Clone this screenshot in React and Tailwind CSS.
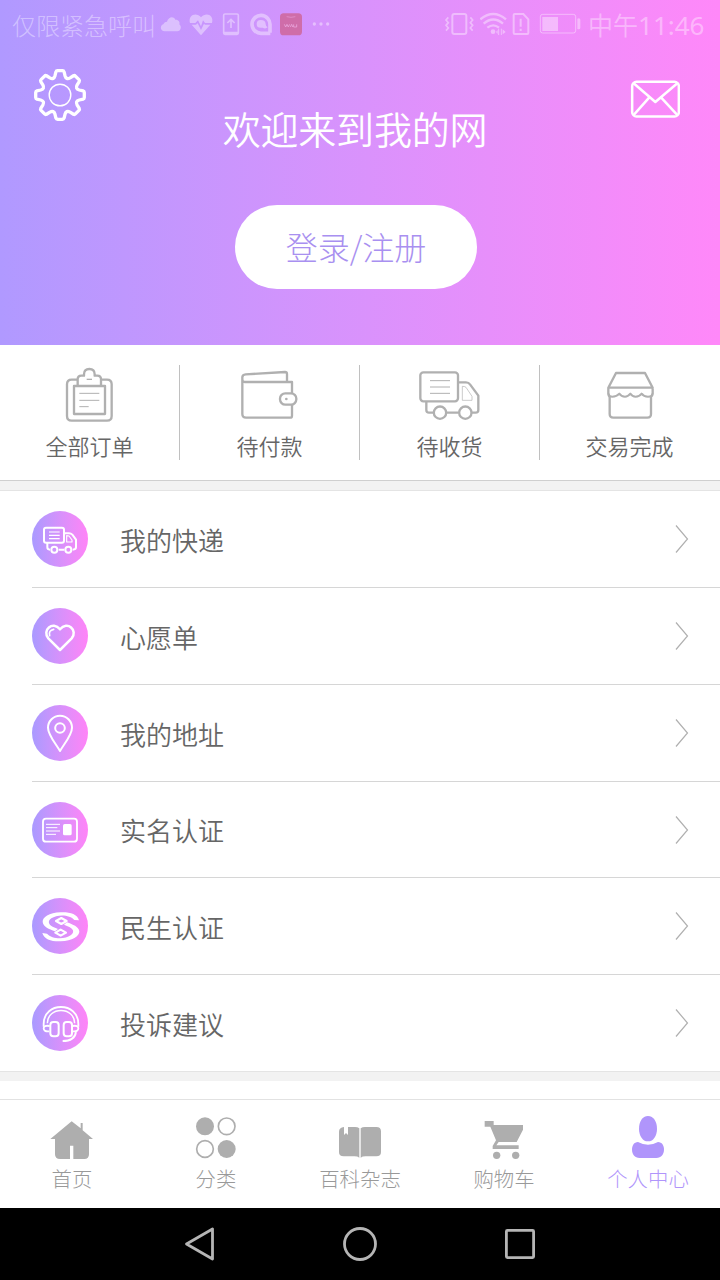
const orderTabs = [
  { label: "全部订单", icon: ClipboardIcon },
  { label: "待付款", icon: WalletIcon },
  { label: "待收货", icon: DeliveryIcon },
  { label: "交易完成", icon: ShopIcon },
];

const menuItems = [
  { label: "我的快递", icon: TruckBadge, height: "h-[97px]" },
  { label: "心愿单", icon: HeartBadge, height: "h-[97px]" },
  { label: "我的地址", icon: PinBadge, height: "h-[97px]" },
  { label: "实名认证", icon: IdCardBadge, height: "h-[96px]" },
  { label: "民生认证", icon: BankBadge, height: "h-[97px]" },
  { label: "投诉建议", icon: HeadsetBadge, height: "h-[96px]" },
];

const navTabs = [
  { label: "首页", icon: HomeIcon },
  { label: "分类", icon: CategoryIcon },
  { label: "百科杂志", icon: BookIcon },
  { label: "购物车", icon: CartIcon },
  { label: "个人中心", icon: UserIcon, active: true },
];

export default function App() {
  return (
    <div className="flex h-[1280px] w-[720px] flex-col overflow-hidden bg-white font-['Noto_Sans_CJK_SC',sans-serif] font-[350]">
      <Header />
      <OrderTabs />
      <div className="h-[11px] shrink-0 border-t border-b border-t-[#cfcfcf] border-b-[#e4e4e4] bg-[#f2f2f2]" />
      <main className="shrink-0">
        {menuItems.map((item, i) => (
          <MenuRow key={item.label} item={item} last={i === menuItems.length - 1} />
        ))}
      </main>
      <div className="h-[10px] shrink-0 border-t border-[#e4e4e4] bg-[#f2f2f2]" />
      <div className="flex-1" />
      <TabBar />
      <SystemNav />
    </div>
  );
}

function Header() {
  return (
    <header className="flex h-[345px] shrink-0 flex-col bg-linear-to-r from-[#b099ff] to-[#ff88f9]">
      <StatusBar />
      <div className="flex h-[105px] items-start justify-between pr-10 pl-[34px]">
        <GearIcon />
        <svg className="mt-[30px] h-[38px] w-[50px]" viewBox="810 240 150 114" fill="none" stroke="#fff" strokeWidth="7.500" strokeLinejoin="round">
          <rect x="816.500" y="245.500" width="140" height="104" rx="13" />
          <path d="M820 249 886 306 953 249M820 346 868 292M903 292 953 346" />
        </svg>
      </div>
      <h1 className="-mt-[54px] -translate-x-[5px] text-center text-[38px] leading-[54px] font-[350] tracking-[-0.2px] text-white">
        欢迎来到我的网
      </h1>
      <button className="mt-[50px] ml-[235px] h-[84px] w-[242px] rounded-full bg-white pb-0.5 text-[32px] font-light text-[#a990f0]">
        登录/注册
      </button>
    </header>
  );
}

function StatusBar() {
  return (
    <div className="flex h-[50px] shrink-0 items-center justify-between pr-[16px] pl-3 text-white/40">
      <div className="flex items-center">
        <span className="w-[144px] text-[24px] leading-[48px] font-light whitespace-nowrap">仅限紧急呼叫</span>
        <svg className="size-[30px]" viewBox="468 30 90 90" fill="currentColor">
          <path d="M494 94C480 94 479 76 490 73 492 67 497 65 501 65 505 51 520 47 526 59 535 58 541 66 538 73 546 79 543 94 532 94Z" />
        </svg>
        <svg className="size-[30px]" viewBox="558 30 90 90" fill="currentColor">
          <path d="M570 69C563 44 590 35 603 52 617 35 643 44 636 69H615L609 61 603 79 594 61 586 69ZM575 74H588L593 70 603 90 612 71 615 74H631L603 106Z" />
        </svg>
        <svg className="size-[30px]" viewBox="648 30 90 90" fill="none" stroke="currentColor" strokeWidth="5">
          <path d="M671 99V46Q671 42 675 42H711Q715 42 715 46V99Q715 103 711 103H675Q671 103 671 99ZM671 98H715M693 84V58M682 69 693 58 704 69" />
        </svg>
        <svg className="size-[30px]" viewBox="738 30 90 90" fill="none" stroke="currentColor">
          <path d="M810 98V74A27 27 0 1 0 783 100H811" strokeWidth="11" />
          <path d="M770 72Q770 60 782 60 797 60 797 73 797 79 803 82 796 88 788 83 770 86 770 72Z" fill="currentColor" stroke="none" />
        </svg>
        <svg className="size-[30px]" viewBox="828 30 90 90">
          <rect x="840" y="40" width="66" height="66" rx="11" fill="#cf6da9" />
          <path d="M860 50Q873 54 886 50" stroke="#e08bc8" strokeWidth="3" fill="none" />
          <path d="M853 73 857 81 861 73 865 81 869 73M871 81 875 73 878 81M881 73V81H890V73" stroke="#e9a5dc" strokeWidth="2.500" fill="none" />
        </svg>
        <svg className="size-[30px]" viewBox="918 30 90 90" fill="currentColor">
          <circle cx="943" cy="72" r="5" />
          <circle cx="963" cy="72" r="5" />
          <circle cx="983" cy="72" r="5" />
        </svg>
      </div>
      <div className="flex items-center">
        <svg className="h-[30px] w-[30px]" viewBox="252 30 90 90" fill="none" stroke="currentColor" strokeWidth="6">
          <rect x="277" y="42" width="42" height="60" rx="6" />
          <path d="M265 52 258 60 265 68 258 76 265 84 258 92M331 52 338 60 331 68 338 76 331 84 338 92" strokeWidth="5" />
        </svg>
        <svg className="ml-1.5 h-[30px] w-[28px]" viewBox="360 30 84 90" fill="none" stroke="currentColor" strokeWidth="7">
          <path d="M361 58Q400 26 438 58M371 71Q400 46 429 71M382 83Q400 69 417 83" />
          <circle cx="399" cy="95" r="7" fill="currentColor" stroke="none" />
          <path d="M416 86V105M424 86V105" strokeWidth="3" />
          <path d="M413 90 408 96 413 102ZM428 88 437 96 428 103Z" fill="currentColor" stroke="none" />
        </svg>
        <svg className="ml-1 h-[30px] w-[20px]" viewBox="456 30 60 90" fill="none" stroke="currentColor" strokeWidth="6">
          <path d="M461 44Q461 42 464 42H490L505 58V99Q505 102 502 102H464Q461 102 461 99Z" />
          <path d="M482 56V80M482 86V93" />
        </svg>
        <svg className="ml-[7px] h-[30px] w-[43px]" viewBox="537 30 129 90" fill="none" stroke="currentColor" strokeWidth="3">
          <rect x="541" y="43" width="106" height="56" rx="7" />
          <path d="M547 51H594V93H547ZM652 56Q661 53 661 60V83Q661 90 652 87Z" fill="currentColor" stroke="none" />
        </svg>
        <span className="ml-[6px] w-[116px] -translate-y-px text-[25px] leading-[48px] whitespace-nowrap">
          中午<span className="font-['Noto_Sans'] text-[26px] font-normal">11:46</span>
        </span>
      </div>
    </div>
  );
}

function GearIcon() {
  return (
    <svg className="mt-[19px] size-[52px]" viewBox="-26 -26 52 52" fill="none" stroke="#fff" strokeLinejoin="round">
      <path d={gearPath(8)} strokeWidth="3.300" />
      <circle r="10.800" strokeWidth="1.400" />
    </svg>
  );
}

// one tooth and the valley after it, repeated around the centre
function gearPath(teeth) {
  const at = (x, y, k) => {
    const a = (k * 2 * Math.PI) / teeth;
    const px = x * Math.cos(a) - y * Math.sin(a);
    const py = x * Math.sin(a) + y * Math.cos(a);
    return `${px.toFixed(2)} ${py.toFixed(2)}`;
  };
  let d = "";
  for (let k = 0; k < teeth; k++) {
    d += `${k ? "L" : "M"}${at(-5, -19.3, k)}L${at(-4.1, -23.1, k)}Q${at(-3.7, -24.3, k)} ${at(-2.5, -24.3, k)}`;
    d += `L${at(2.5, -24.3, k)}Q${at(3.7, -24.3, k)} ${at(4.1, -23.1, k)}L${at(5, -19.3, k)}`;
    d += `Q${at(6.2, -15, k)} ${at(-5, -19.3, k + 1)}`;
  }
  return d + "Z";
}

function OrderTabs() {
  return (
    <section className="flex h-[135px] shrink-0 items-start pt-5">
      {orderTabs.map(({ label, icon: Icon }) => (
        <div
          key={label}
          className="flex h-[95px] flex-1 flex-col items-center border-r border-[#c0c0c0] last:border-transparent"
        >
          <Icon />
          <span className="mt-[2px] text-[22px] leading-8 text-[#666]">{label}</span>
        </div>
      ))}
    </section>
  );
}

function OrderSvg({ viewBox, children }) {
  return (
    <svg className="-mt-0.5 h-[64px] w-[63px] shrink-0" viewBox={viewBox} fill="none" stroke="#b0b0b0" strokeWidth="7" strokeLinejoin="round">
      {children}
    </svg>
  );
}

function ClipboardIcon() {
  return (
    <OrderSvg viewBox="174 69 189 192">
      <path d="M232 119H215Q201 119 201 133V228Q201 242 215 242H321Q335 242 335 228V133Q335 119 321 119H304" />
      <path d="M233 137V118Q233 107 244 107H252V103Q252 87 268 87 284 87 284 103V107H292Q303 107 303 118V137" />
      <path d="M222 138H315V222H222Z" />
      <path d="M260 118H276" strokeWidth="4" />
      <path d="M238 160H298M238 181H298M238 200H266" strokeWidth="3" />
    </OrderSvg>
  );
}

function WalletIcon() {
  return (
    <OrderSvg viewBox="714 69 189 192">
      <path d="M876 160V126H734Q727 126 727 118V112Q727 104 737 103L855 96Q861 96 861 102V126M727 116V222Q727 233 738 233H870Q876 233 876 227V194" />
      <rect x="840" y="160" width="49" height="34" rx="16" />
      <circle cx="859" cy="177" r="4" fill="#b0b0b0" stroke="none" />
    </OrderSvg>
  );
}

function DeliveryIcon() {
  return (
    <OrderSvg viewBox="174 69 189 192">
      <rect x="181" y="97" width="113" height="87" rx="9" />
      <path d="M199 186V210Q199 218 207 218H220M259 218H296M335 218H347Q355 218 355 210V167L330 133Q326 127 318 127H296" />
      <circle cx="240" cy="218" r="18.500" />
      <circle cx="316" cy="218" r="18.500" />
      <path d="M210 122H270M210 141H270M210 160H270" strokeWidth="3" />
      <path d="M307 139V181H336V169L318 142Q315 139 307 139Z" strokeWidth="2" />
    </OrderSvg>
  );
}

function ShopIcon() {
  return (
    <OrderSvg viewBox="714 69 189 192">
      <path d="M745 143 768 99H855L878 143ZM745 143V160Q745 168 749 170M878 143V160Q878 168 873 170" />
      <path d="M745 160Q747 170 757 170 770 170 778 161 784 170 795 170 804 170 811 161 817 170 827 170 838 170 845 161 851 170 864 170 876 170 878 160" strokeWidth="6" />
      <path d="M749 168V222Q749 233 760 233H862Q873 233 873 222V168" />
    </OrderSvg>
  );
}

function MenuRow({ item, last }) {
  const Icon = item.icon;
  return (
    <div className={`flex items-center pl-8 ${item.height}`}>
      <div
        className={
          last
            ? "flex h-full flex-1 items-center"
            : "flex h-full flex-1 items-center border-b border-[#d6d6d6]"
        }
      >
        <Icon />
        <span className="mt-px ml-8 flex-1 text-[26px] leading-10 text-[#666]">{item.label}</span>
        <svg className="mr-[31px] h-[30px] w-[14px]" viewBox="0 0 14 30" fill="none" stroke="#b0b0b0" strokeWidth="1.200">
          <path d="M1 1.500 12.500 15 1 28.500" />
        </svg>
      </div>
    </div>
  );
}

function Badge({ viewBox, children }) {
  return (
    <div className="size-14 shrink-0 rounded-full bg-linear-to-r from-[#a99aff] to-[#ff84f7]">
      <svg className="size-14" viewBox={viewBox} fill="none" stroke="#fff" strokeWidth="6" strokeLinejoin="round">
        {children}
      </svg>
    </div>
  );
}

function TruckBadge() {
  return (
    <Badge viewBox="96 33 168 168">
      <rect x="132" y="83" width="60" height="45" rx="6" />
      <path d="M142 129V142Q142 149 150 149M176 149H193M218 149Q228 149 228 142V119L217 104Q213 100 207 100H193" />
      <circle cx="163" cy="149" r="9" />
      <circle cx="205" cy="149" r="9" />
      <path d="M147 96H179M147 106H179M147 116H179" strokeWidth="3.500" />
      <path d="M200 107V126H216V120L207 108Z" strokeWidth="3.500" />
    </Badge>
  );
}

function HeartBadge() {
  return (
    <Badge viewBox="96 324 168 168">
      <path d="M180 450 145 415C125 391 158 361 180 388 202 361 235 391 215 415Z" strokeWidth="7.500" />
      <path d="M149 407Q145 391 161 388" strokeWidth="5" strokeLinecap="round" />
    </Badge>
  );
}

function PinBadge() {
  return (
    <Badge viewBox="96 614 168 168">
      <path d="M180 752C168 731 144 704 144 682A36 36 0 0 1 216 682C216 704 192 731 180 752Z" />
      <circle cx="180" cy="683" r="14.500" />
    </Badge>
  );
}

function IdCardBadge() {
  return (
    <Badge viewBox="96 63 168 168">
      <rect x="129" y="113" width="102" height="69" rx="9" strokeWidth="5.500" />
      <rect x="189" y="129" width="26" height="34" rx="5" fill="#fff" stroke="none" />
      <path d="M138 130H180M138 140H172M138 150H180M138 160H168" strokeWidth="3" />
    </Badge>
  );
}

function BankBadge() {
  return (
    <Badge viewBox="96 353 168 168">
      {/* two interlocking hooks, each ending in a diamond */}
      <g fill="#fff" stroke="none">
        <path d="M237 420C232 401 210 395 182 396 147 397 127 411 128 425 130 440 147 446 165 453L174 446 158 439C144 432 143 422 154 414 172 401 210 402 223 419Z" />
        <path d="M127 458C132 477 154 484 182 483 217 482 239 467 238 453 236 439 219 433 201 426L192 433 208 440C222 447 223 457 212 465 194 478 156 477 141 460Z" />
      </g>
      <path d="M168 422 184 413 200 422 184 431Z" strokeWidth="6.500" />
      <path d="M166 457 182 448 198 457 182 466Z" strokeWidth="6.500" />
    </Badge>
  );
}

function HeadsetBadge() {
  return (
    <Badge viewBox="96 644 168 168">
      <path d="M131 739V731C131 663 235 663 235 731V739" strokeWidth="5.500" />
      <path d="M142 729C142 678 224 678 224 729" strokeWidth="4.500" />
      <rect x="151" y="725" width="25" height="43" rx="9" />
      <rect x="191" y="725" width="25" height="43" rx="9" />
      <path d="M149 737Q131 734 131 744 131 755 148 753M217 737Q235 734 235 744 235 755 218 753M228 755Q224 782 188 782" strokeWidth="5.500" />
    </Badge>
  );
}

function TabBar() {
  return (
    <nav className="flex h-[109px] shrink-0 border-t border-[#e2e2e2] bg-white pt-4">
      {navTabs.map(({ label, icon: Icon, active }) => (
        <div
          key={label}
          className={
            active
              ? "flex flex-1 flex-col items-center text-[#b095fb]"
              : "flex flex-1 flex-col items-center text-[#aeaeae]"
          }
        >
          <Icon />
          <span className={active ? "-mt-px text-[20.4px] leading-[30px] font-light" : "-mt-px text-[20.4px] leading-[30px] font-light text-[#999]"}>
            {label}
          </span>
        </div>
      ))}
    </nav>
  );
}

function TabSvg({ viewBox, children }) {
  return (
    <svg className="size-12 shrink-0" viewBox={viewBox} fill="currentColor">
      {children}
    </svg>
  );
}

function HomeIcon() {
  return (
    <TabSvg viewBox="144 168 144 144">
      <path d="M151 237 215 184 242 205V189H248V211L279 237H267V283Q267 297 253 297H220V257H210V297H180Q165 297 165 283V237Z" />
    </TabSvg>
  );
}

function CategoryIcon() {
  return (
    <TabSvg viewBox="576 168 144 144">
      <circle cx="615" cy="199" r="27" />
      <circle cx="680" cy="267" r="27" />
      <circle cx="680" cy="199" r="25" fill="none" stroke="currentColor" strokeWidth="5" />
      <circle cx="615" cy="267" r="25" fill="none" stroke="currentColor" strokeWidth="5" />
    </TabSvg>
  );
}

function BookIcon() {
  return (
    <TabSvg viewBox="1008 168 144 144">
      <path d="M1032 201V225L1038 219 1044 225V201H1065Q1073 201 1078 205V293Q1073 289 1063 289H1031Q1017 289 1017 276V215Q1017 203 1032 201Z" />
      <path d="M1082 205Q1087 201 1095 201H1129Q1143 201 1143 214V276Q1143 289 1129 289H1097Q1087 289 1082 293Z" />
    </TabSvg>
  );
}

function CartIcon() {
  return (
    <TabSvg viewBox="360 168 144 144">
      <path d="M374 183H401V195H489V209L470 246H416L409 256H476V267H398V258L408 241 391 200H374Z" />
      <circle cx="410" cy="286" r="11" />
      <circle cx="467" cy="286" r="11" />
    </TabSvg>
  );
}

function UserIcon() {
  return (
    <TabSvg viewBox="792 168 144 144">
      <path d="M864 168C881 168 891 186 891 206S881 244 864 244 837 226 837 206 847 168 864 168Z" />
      <path d="M834 246Q848 254 864 254T894 246C906 246 912 257 912 268 912 284 904 294 889 294H839C824 294 816 284 816 268 816 257 822 246 834 246Z" />
    </TabSvg>
  );
}

function SystemNav() {
  return (
    <div className="flex h-[72px] shrink-0 items-center justify-center gap-[124px] bg-black">
      <svg className="size-9" viewBox="0 0 36 36" fill="none" stroke="#b5b5b5" strokeWidth="2.800" strokeLinejoin="round">
        <path d="M4.500 18 30.500 3V33Z" />
      </svg>
      <svg className="size-9" viewBox="0 0 36 36" fill="none" stroke="#b5b5b5" strokeWidth="2.800">
        <circle cx="18" cy="18" r="15.500" />
      </svg>
      <svg className="size-9" viewBox="0 0 36 36" fill="none" stroke="#b5b5b5" strokeWidth="2.800">
        <rect x="4.400" y="4.400" width="27.200" height="27.200" rx="1" />
      </svg>
    </div>
  );
}
